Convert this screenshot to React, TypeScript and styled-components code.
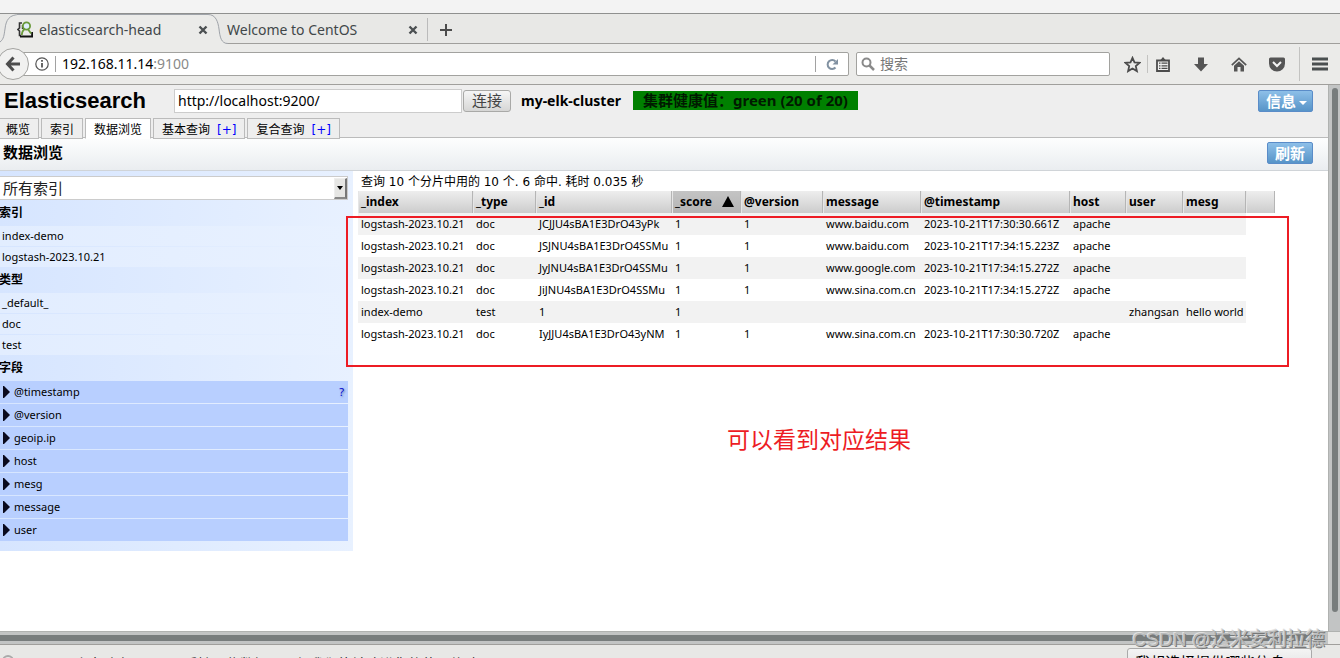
import React from "react";
import styled, { createGlobalStyle } from "styled-components";

const ui = `"Noto Sans", "Noto Sans CJK SC", sans-serif`;
const page = `"DejaVu Sans", "Noto Sans CJK SC", sans-serif`;
const small = `"Noto Sans", "Noto Sans CJK SC", sans-serif`;

const Global = createGlobalStyle`
  * { box-sizing: border-box; }
  html, body { margin: 0; height: 100%; overflow: hidden; background: #e8e8e6; }
  button, input, select { margin: 0; padding: 0; border-radius: 0; font-family: inherit; }
  a { text-decoration: none; }
`;

const Window = styled.div`
  display: flex;
  flex-direction: column;
  height: 100vh;
  overflow: hidden;
  font-family: ${ui};
  color: #000;
`;

const TitleStrip = styled.div`
  flex: none;
  height: 14px;
  background: #f3f3f3;
  border-bottom: 1px solid #8f908f;
`;

const TabStrip = styled.div`
  flex: none;
  display: flex;
  height: 30px;
  background: #e8e8e6;
  border-bottom: 1px solid #a09f9c;
`;

const BrowserTab = styled.div`
  display: flex;
  height: 30px;
`;

const TabEdge = styled.svg`
  flex: none;
  width: 20px;
  height: 30px;
`;

const TabBody = styled.div<{ $active?: boolean }>`
  display: flex;
  align-items: center;
  width: ${(p) => (p.$active ? 191 : 200)}px;
  height: 30px;
  margin-left: ${(p) => (p.$active ? -3 : -1)}px;
  padding: ${(p) => (p.$active ? "0" : "1px 9px 0 0")};
  border-top: 1px solid ${(p) => (p.$active ? "#9fa3a9" : "transparent")};
  background: ${(p) => (p.$active ? "#ebebe9" : "transparent")};
  font-size: 14px;
  color: #414749;
`;

const TabTitle = styled.span`
  flex: 1;
  margin-left: 6px;
  line-height: 20px;
  white-space: nowrap;
  &:first-child { margin-left: 0; }
`;

const IconButton = styled.button`
  display: flex;
  align-items: center;
  justify-content: center;
  border: 0;
  background: none;
`;

const NewTab = styled(IconButton)`
  width: 37px;
  height: 23px;
  margin-top: 4px;
  border-left: 1px solid #bbb;
`;

const NavBar = styled.div`
  flex: none;
  display: flex;
  align-items: center;
  height: 41px;
  padding-right: 8px;
  background: #ebebe9;
  border-bottom: 1px solid #a09f9c;
`;

const BackButton = styled(IconButton)`
  z-index: 1;
  flex: none;
  width: 32px;
  height: 32px;
  margin-left: -3px;
  border: 1px solid #a3a3a0;
  border-radius: 50%;
  background: #f1f1f0;
`;

const UrlBar = styled.div`
  flex: 1;
  display: flex;
  align-items: center;
  height: 24px;
  margin-left: -6px;
  padding-left: 11px;
  background: #fff;
  border: 1px solid #a2a29f;
  border-radius: 0 2px 2px 0;
  font-size: 14px;
`;

const UrlDivider = styled.span`
  width: 1px;
  height: 16px;
  margin: 0 6px;
  background: #a2a2a2;
`;

const UrlText = styled.a`
  flex: 1;
  color: #000;
  line-height: 20px;
  span { color: #8a8a8a; }
`;

const Reload = styled(IconButton)`
  width: 33px;
  height: 16px;
  border-left: 1px solid #a2a2a2;
`;

const SearchBox = styled.label`
  display: flex;
  align-items: center;
  width: 254px;
  height: 24px;
  margin: 0 12px 0 7px;
  padding-left: 4px;
  gap: 5px;
  background: #fff;
  border: 1px solid #a2a29f;
  border-radius: 2px;
`;

const SearchInput = styled.input`
  flex: 1;
  min-width: 0;
  border: 0;
  outline: 0;
  background: none;
  font-size: 14px;
  line-height: 20px;
  &::placeholder { color: #777; opacity: 1; }
`;

const NavIcon = styled(IconButton)<{ $narrow?: boolean }>`
  width: ${(p) => (p.$narrow ? 20 : 38)}px;
  height: 18px;
`;

const NavIcons = styled.div`
  display: flex;
  align-items: center;
`;

const Divider = styled.span<{ $tall?: boolean }>`
  width: 1px;
  height: ${(p) => (p.$tall ? 34 : 18)}px;
  margin: ${(p) => (p.$tall ? "0 0 0 3px" : "0 -4px 0 5px")};
  background: #c3c3c1;
`;

const MenuButton = styled(IconButton)`
  width: 24px;
  height: 18px;
  margin-left: 8px;
`;

const Viewport = styled.div`
  flex: 1;
  display: flex;
  min-height: 0;
`;

const Page = styled.div`
  position: relative;
  flex: 1;
  min-width: 0;
  overflow: hidden;
  background: #fff;
  font-family: ${page};
`;

const VScroll = styled.div`
  flex: none;
  width: 12px;
  padding: 3px 2px 19px 3px;
  background: #c2c4c4;
  border-left: 1px solid #b0b2b0;
`;

const Thumb = styled.div`
  width: 6px;
  height: 100%;
  border-radius: 3px;
  background: #787d7d;
`;

const HScroll = styled.div`
  flex: none;
  height: 14px;
  padding-top: 3px;
  background: linear-gradient(90deg, #c2c4c4 calc(100% - 12px), #e8e8e6 calc(100% - 12px));
  border-top: 1px solid #b0b2b0;
  border-bottom: 1px solid #a09f9c;
`;

const HThumb = styled.div`
  height: 6px;
  margin-right: 16px;
  background: #787d7d;
`;

const Header = styled.header`
  display: flex;
  flex-direction: column;
  justify-content: space-between;
  height: 53px;
  background: #eee;
  border-bottom: 1px solid #bbb;
`;

const HeaderRow = styled.div`
  display: flex;
  align-items: center;
  height: 31px;
  padding-right: 15px;
`;

const Brand = styled.h1`
  width: 170px;
  margin: 0 0 0 4px;
  font: bold 22px/28px "Liberation Sans", sans-serif;
`;

const Address = styled.input`
  width: 288px;
  height: 24px;
  margin-right: 1px;
  padding: 0 3px;
  border: 1px solid #ccc;
  background: #fff;
  font-family: ${ui};
  font-size: 14px;
`;

const Connect = styled.button`
  width: 48px;
  height: 22px;
  border: 1px solid #a9a9a7;
  border-radius: 3px;
  background: linear-gradient(#f6f6f6, #d6d6d5);
  font-size: 15px;
  line-height: 18px;
  color: #444;
`;

const ClusterName = styled.span`
  width: 112px;
  margin-left: 10px;
  font: bold 14px/20px ${small};
  white-space: nowrap;
`;

const Health = styled.span`
  height: 19px;
  padding: 0 10px;
  background: #008000;
  font: bold 15px/19px ${small};
  color: #001a00;
  white-space: pre;
`;

const BlueButton = styled.button`
  display: flex;
  align-items: center;
  gap: 3px;
  height: 22px;
  margin-left: auto;
  padding: 0 7px;
  border: 1px solid #5a8cc8;
  border-radius: 2px;
  background: linear-gradient(#8dbfe8, #5794c8);
  font: bold 15px/20px ${small};
  color: #fff;
  svg { margin: 5px -2px 0 0; }
`;

const Tabs = styled.nav`
  display: flex;
  gap: 2px;
  height: 20px;
  margin-bottom: -1px;
`;

const PageTab = styled.a<{ $active?: boolean }>`
  height: 21px;
  padding: 2px 8px 0;
  border: 1px solid #bbb;
  border-bottom: 1px solid ${(p) => (p.$active ? "#fff" : "#bbb")};
  background: ${(p) => (p.$active ? "#fff" : "#eee")};
  font-size: 12px;
  line-height: 18px;
  color: #000;
  white-space: nowrap;
  &:first-child { padding-left: 6px; border-left: 0; }
  span { margin-left: 7px; color: #00f; }
`;

const Toolbar = styled.div`
  display: flex;
  align-items: center;
  height: 33px;
  padding: 0 15px 2px 3px;
  background: linear-gradient(#fdfefe, #eaedf0);
  border-bottom: 1px solid #d0d4d8;
`;

const ToolbarTitle = styled.h2`
  margin: 0;
  font-size: 15px;
  line-height: 20px;
`;

const Browser = styled.div`
  display: flex;
  align-items: flex-start;
`;

const Sidebar = styled.aside`
  flex: none;
  width: 353px;
  padding: 5px 5px 10px 0;
  background: linear-gradient(90deg, #d6e5ff, #e8f1ff);
  font: 11px/20px ${small};
`;

const SelectWrap = styled.label`
  position: relative;
  display: block;
`;

const IndexSelect = styled.select`
  appearance: none;
  display: block;
  width: 100%;
  height: 24px;
  padding-left: 3px;
  border: 1px solid #ccc;
  border-left: 0;
  background: #fff;
  font-size: 15px;
  color: #222;
`;

const SelectArrow = styled.span`
  position: absolute;
  top: 2px;
  right: 1px;
  display: flex;
  align-items: center;
  justify-content: center;
  width: 13px;
  height: 21px;
  border: 1px solid #eee;
  border-right: 2px solid #777;
  border-bottom: 2px solid #888;
  background: #e6e6e4;
  pointer-events: none;
`;

const SideHeading = styled.h3`
  margin: 0 0 0 -1px;
  font-size: 12px;
  line-height: 26px;
`;

const List = styled.ul`
  display: flex;
  flex-direction: column;
  gap: 1px;
  margin: 0;
  padding: 0;
  list-style: none;
`;

const Item = styled.li`
  padding-left: 2px;
  background: linear-gradient(90deg, #e2edff, #e8f1ff);
`;

const Field = styled.li`
  display: flex;
  align-items: center;
  gap: 4px;
  height: 22px;
  padding: 0 4px 0 3px;
  background: #b8cfff;
  a { margin-left: auto; color: #00c; text-shadow: 1px 1px 2px #6677aa; }
`;

const Results = styled.section`
  padding: 2px 0 0 5px;
`;

const Summary = styled.p`
  margin: 0 0 0 3px;
  height: 18px;
  font: 12px/18px ${page};
  white-space: pre;
`;

const Table = styled.table`
  width: 917px;
  table-layout: fixed;
  border-collapse: separate;
  border-spacing: 0;
  font: 11px/22px ${small};
  white-space: nowrap;
`;

const Th = styled.th<{ $sorted?: boolean }>`
  height: 22px;
  padding: 0 3px 0 2px;
  border-right: 1px solid #b5b5b5;
  border-left: 1px solid #e6e6e6;
  background: ${(p) => (p.$sorted ? "linear-gradient(#c4c4c4, #b4b4b4)" : "linear-gradient(#eee, #ccc)")};
  font-size: 12px;
  text-align: left;
  svg { float: right; margin: 5px 3px 0 0; }
`;

const Td = styled.td`
  height: 22px;
  padding: 0 3px;
  tr:nth-child(odd) > & { background: #f2f2f2; }
`;

const Highlight = styled.div`
  position: absolute;
  top: 131px;
  left: 346px;
  width: 943px;
  height: 151px;
  border: 2px solid #ed1c24;
`;

const Note = styled.div`
  position: absolute;
  top: 336px;
  left: 727px;
  font: 23px/34px "Noto Sans CJK SC", sans-serif;
  color: #ed1c24;
  white-space: nowrap;
`;

const NoticeBar = styled.footer`
  flex: none;
  display: flex;
  align-items: flex-start;
  justify-content: space-between;
  height: 13px;
  padding: 0 28px 0 2px;
  overflow: hidden;
  font-size: 14px;
  line-height: 20px;
  color: #222;
  white-space: nowrap;
`;

const NoticeText = styled.span`
  display: flex;
  gap: 12px;
  padding-top: 9px;
`;

const NoticeButton = styled.button`
  width: 185px;
  height: 28px;
  margin-top: 3px;
  border: 1px solid #aaa;
  border-radius: 3px;
  background: linear-gradient(#f4f4f4, #ddd);
  font-size: 15px;
  line-height: 26px;
`;

const Watermark = styled.div`
  position: absolute;
  right: 15px;
  bottom: 4px;
  font: 19px/28px "Liberation Sans", "Noto Sans CJK SC", sans-serif;
  color: #b9bbbb;
  text-shadow: 1px 1px 0 #777, -1px -1px 0 #e0e0e0;
  white-space: nowrap;
`;

const Close = () => (
  <svg width="10" height="10" viewBox="0 0 10 10">
    <path d="M1.5 1.5 8.5 8.5M8.5 1.5 1.5 8.5" stroke="#4c5052" strokeWidth="2.4" />
  </svg>
);

const widths = [115, 63, 136, 69, 82, 98, 149, 56, 57, 63, 29];
const columns = ["_index", "_type", "_id", "_score", "@version", "message", "@timestamp", "host", "user", "mesg", ""];
const log = "logstash-2023.10.21";
const rows = [
  [log, "doc", "JCJJU4sBA1E3DrO43yPk", "1", "1", "www.baidu.com", "2023-10-21T17:30:30.661Z", "apache", "", ""],
  [log, "doc", "JSJNU4sBA1E3DrO4SSMu", "1", "1", "www.baidu.com", "2023-10-21T17:34:15.223Z", "apache", "", ""],
  [log, "doc", "JyJNU4sBA1E3DrO4SSMu", "1", "1", "www.google.com", "2023-10-21T17:34:15.272Z", "apache", "", ""],
  [log, "doc", "JiJNU4sBA1E3DrO4SSMu", "1", "1", "www.sina.com.cn", "2023-10-21T17:34:15.272Z", "apache", "", ""],
  ["index-demo", "test", "1", "1", "", "", "", "", "zhangsan", "hello world"],
  [log, "doc", "IyJJU4sBA1E3DrO43yNM", "1", "1", "www.sina.com.cn", "2023-10-21T17:30:30.720Z", "apache", "", ""],
];
const fields = ["@timestamp", "@version", "geoip.ip", "host", "mesg", "message", "user"];

export default function App() {
  return (
    <Window>
      <Global />
      <TitleStrip />
      <TabStrip>
        <BrowserTab>
          <TabEdge viewBox="0 0 20 30">
            <path d="M0 29C4 26 4 21 5 15C6 6 9 .5 20 .5V30H0z" fill="#ebebe9" />
            <path d="M0 28C4 25 4 21 5 15C6 6 9 .5 20 .5" fill="none" stroke="#9fa3a9" />
          </TabEdge>
          <TabBody $active>
            <svg width="16" height="17" viewBox="0 0 16 17">
              <path d="M5 2H2.500V7L1 8.500 2.500 10v4.500H4" fill="none" stroke="#333" strokeWidth="1.600" />
              <path d="M5.500 4v4" stroke="#333" strokeWidth="1.400" />
              <path d="M3 15.500h12.200V11" fill="none" stroke="#111" strokeWidth="2" />
              <circle cx="9.500" cy="5" r="3.600" fill="#dfeefb" stroke="#6a9a3b" strokeWidth="1.800" />
              <path d="M7.500 8C5.500 9.500 5 11 4.800 14M11 8.300 14 12.500" fill="none" stroke="#6a9a3b" strokeWidth="1.800" />
            </svg>
            <TabTitle>elasticsearch-head</TabTitle>
            <IconButton aria-label="Close tab"><Close /></IconButton>
          </TabBody>
          <TabEdge viewBox="0 0 20 30">
            <path d="M0 .5C8 .5 10 8 11 15C12 23 13 29.500 20 29.500V30H0z" fill="#ebebe9" />
            <path d="M0 .5C8 .5 10 8 11 15C12 23 13 29.500 20 29.500" fill="none" stroke="#9fa3a9" />
          </TabEdge>
        </BrowserTab>
        <BrowserTab>
          <TabBody>
            <TabTitle>Welcome to CentOS</TabTitle>
            <IconButton aria-label="Close tab"><Close /></IconButton>
          </TabBody>
        </BrowserTab>
        <NewTab aria-label="New tab">
          <svg width="14" height="14"><path d="M7 1v12M1 7h12" stroke="#4c4c4c" strokeWidth="2" /></svg>
        </NewTab>
      </TabStrip>

      <NavBar>
        <BackButton aria-label="Back">
          <svg width="16" height="16" viewBox="0 0 16 16">
            <path d="M8.500 1.500 2.500 8l6 6.500M3 8h12" fill="none" stroke="#4d4d4d" strokeWidth="3" />
          </svg>
        </BackButton>
        <UrlBar>
          <svg width="14" height="14" viewBox="0 0 14 14">
            <circle cx="7" cy="7" r="6.200" fill="none" stroke="#555" strokeWidth="1.200" />
            <path d="M7 6v4.500M7 3v1.800" stroke="#555" strokeWidth="1.800" />
          </svg>
          <UrlDivider />
          <UrlText href="#">192.168.11.14<span>:9100</span></UrlText>
          <Reload aria-label="Reload">
            <svg width="13" height="13" viewBox="0 0 13 13">
              <path d="M9.500 9.500A4.500 4.500 0 1 1 9.500 3.500" fill="none" stroke="#8292a2" strokeWidth="2" />
              <path d="M12 1v5.500H6.500z" fill="#8292a2" />
            </svg>
          </Reload>
        </UrlBar>
        <SearchBox>
          <svg width="14" height="14" viewBox="0 0 14 14">
            <circle cx="5.500" cy="5.500" r="4" fill="none" stroke="#8a8a8a" strokeWidth="2" />
            <path d="M8.500 8.500 13 13" stroke="#8a8a8a" strokeWidth="2.500" />
          </svg>
          <SearchInput placeholder="搜索" aria-label="搜索" />
        </SearchBox>
        <NavIcons>
          <NavIcon $narrow aria-label="Bookmark">
            <svg width="17" height="17" viewBox="0 0 17 17">
              <path d="m8.500 1.800 2 4.500 5 .5-3.700 3.300 1.100 5-4.400-2.600-4.400 2.600 1.100-5L1.500 6.800l5-.5z" fill="none" stroke="#4c4c4c" strokeWidth="1.800" />
            </svg>
          </NavIcon>
          <Divider />
          <NavIcon aria-label="Library">
            <svg width="14" height="15" viewBox="0 0 14 15">
              <path d="M1 3.500h12V14H1z" fill="#f0f0ef" stroke="#4c4c4c" strokeWidth="1.800" />
              <path d="M4 3.500 7 0l3 3.500z" fill="#4c4c4c" />
              <path d="M3 6.200h1.500M5.500 6.200h6M3 8.800h1.500M5.500 8.800h6M3 11.400h1.500M5.500 11.400h6" stroke="#4c4c4c" strokeWidth="1.200" />
            </svg>
          </NavIcon>
          <NavIcon aria-label="Downloads">
            <svg width="14" height="15" viewBox="0 0 14 15"><path d="M4 .5h6V7h4l-7 7.500L0 7h4z" fill="#555" /></svg>
          </NavIcon>
          <NavIcon aria-label="Home">
            <svg width="16" height="15" viewBox="0 0 16 15">
              <path d="M.8 8.200 8 1.500l7.200 6.700" fill="none" stroke="#555" strokeWidth="1.700" />
              <path d="M3 8.800 8 4.200l5 4.600V14.500H9.500V10h-3v4.500H3z" fill="#555" />
            </svg>
          </NavIcon>
          <NavIcon aria-label="Pocket">
            <svg width="16" height="15" viewBox="0 0 16 15">
              <path d="M1.500.5h13a1.500 1.500 0 0 1 1.500 1.500v4.500a8 8 0 0 1-16 0V2A1.500 1.500 0 0 1 1.500.5z" fill="#555" />
              <path d="M4 5l4 4 4-4" fill="none" stroke="#f3f3f3" strokeWidth="2" />
            </svg>
          </NavIcon>
          <Divider $tall />
          <MenuButton aria-label="Menu">
            <svg width="16" height="14"><path d="M0 2h16M0 7h16M0 12h16" stroke="#4a4f50" strokeWidth="3" /></svg>
          </MenuButton>
        </NavIcons>
      </NavBar>

      <Viewport>
        <Page>
          <Header>
            <HeaderRow>
              <Brand>Elasticsearch</Brand>
              <Address aria-label="Address" defaultValue="http://localhost:9200/" />
              <Connect>连接</Connect>
              <ClusterName>my-elk-cluster</ClusterName>
              <Health>集群健康值：green (20 of 20)</Health>
              <BlueButton>
                信息
                <svg width="8" height="4"><path d="M0 0h8L4 4z" fill="#fff" /></svg>
              </BlueButton>
            </HeaderRow>
            <Tabs>
              <PageTab href="#">概览</PageTab>
              <PageTab href="#">索引</PageTab>
              <PageTab href="#" $active>数据浏览</PageTab>
              <PageTab href="#">基本查询<span>[+]</span></PageTab>
              <PageTab href="#">复合查询<span>[+]</span></PageTab>
            </Tabs>
          </Header>
          <Toolbar>
            <ToolbarTitle>数据浏览</ToolbarTitle>
            <BlueButton>刷新</BlueButton>
          </Toolbar>
          <Browser>
            <Sidebar>
              <SelectWrap>
                <IndexSelect aria-label="索引"><option>所有索引</option></IndexSelect>
                <SelectArrow><svg width="6" height="4"><path d="M0 0h6L3 4z" /></svg></SelectArrow>
              </SelectWrap>
              <SideHeading>索引</SideHeading>
              <List><Item>index-demo</Item><Item>{log}</Item></List>
              <SideHeading>类型</SideHeading>
              <List><Item>_default_</Item><Item>doc</Item><Item>test</Item></List>
              <SideHeading>字段</SideHeading>
              <List>
                {fields.map((f, i) => (
                  <Field key={f}>
                    <svg width="7" height="12"><path d="M0 0h1l6 6-6 6H0z" fill="#0a0a1e" /></svg>
                    {f}
                    {i === 0 && <a href="#">?</a>}
                  </Field>
                ))}
              </List>
            </Sidebar>
            <Results>
              <Summary>查询 10 个分片中用的 10 个. 6 命中. 耗时 0.035 秒</Summary>
              <Table>
                <colgroup>{widths.map((w, i) => <col key={i} width={w} />)}</colgroup>
                <thead>
                  <tr>
                    {columns.map((c) => (
                      <Th key={c} $sorted={c === "_score"}>
                        {c}
                        {c === "_score" && <svg width="12" height="11"><path d="M6 0l6 11H0z" /></svg>}
                      </Th>
                    ))}
                  </tr>
                </thead>
                <tbody>
                  {rows.map((r) => <tr key={r[2]}>{r.map((v, i) => <Td key={i}>{v}</Td>)}</tr>)}
                </tbody>
              </Table>
            </Results>
          </Browser>
          <Highlight />
          <Note>可以看到对应结果</Note>
        </Page>
        <VScroll><Thumb /></VScroll>
      </Viewport>
      <HScroll><HThumb /></HScroll>
      <NoticeBar>
        <NoticeText>
          <svg width="12" height="12"><circle cx="6" cy="7" r="5" fill="none" stroke="#aaa" strokeWidth="2" /></svg>
          Firefox 会自动向 Mozilla 反馈一些数据，以便我们能够改进您的使用体验。
        </NoticeText>
        <NoticeButton>我想选择提供哪些信息(C)</NoticeButton>
      </NoticeBar>
      <Watermark>CSDN @达米安利拉德</Watermark>
    </Window>
  );
}
